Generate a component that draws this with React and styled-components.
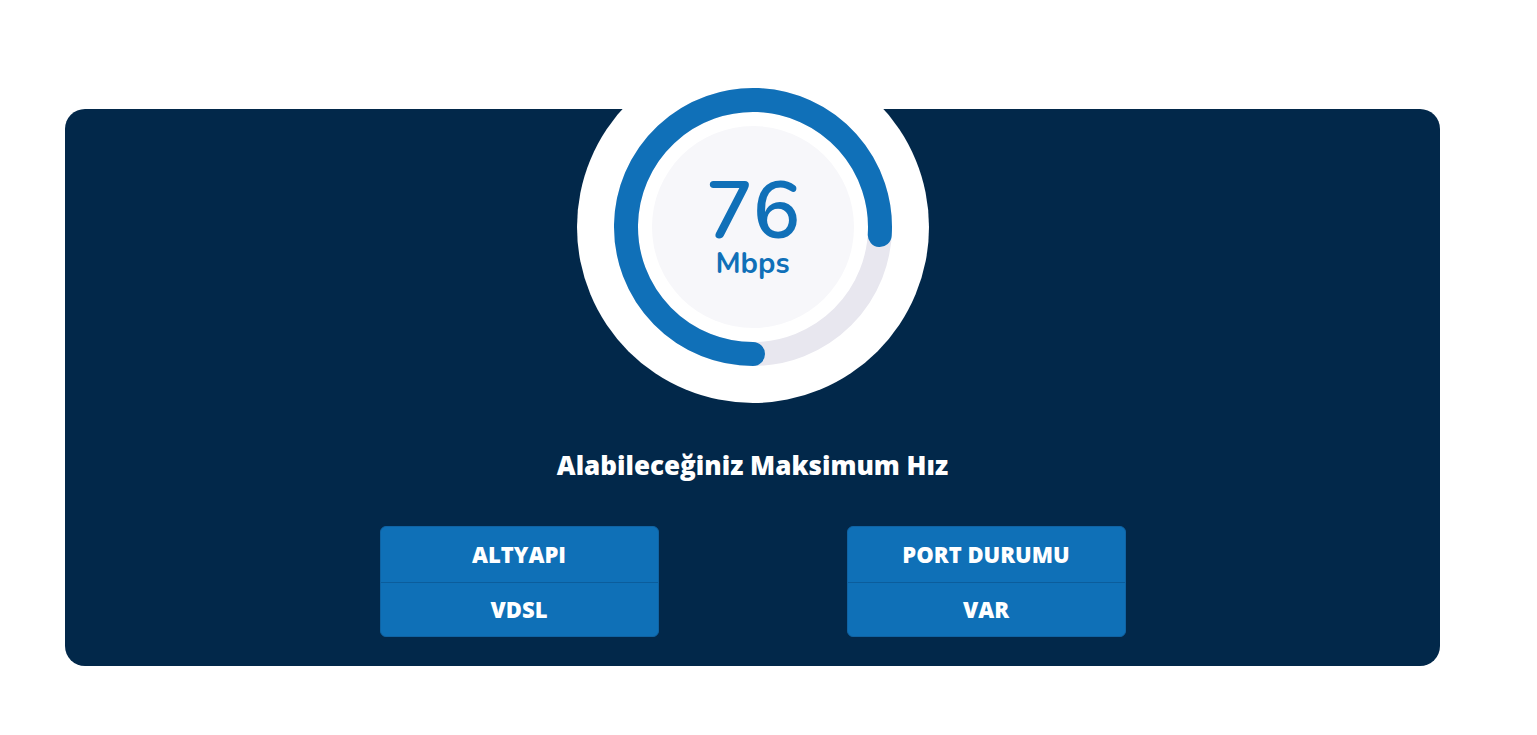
import React from 'react';
import styled, { createGlobalStyle } from 'styled-components';

const GlobalStyle = createGlobalStyle`
  html, body {
    margin: 0;
    padding: 0;
    background: #ffffff;
  }
  body {
    font-family: 'Open Sans', 'Liberation Sans', sans-serif;
  }
`;

const Page = styled.div`
  padding: 109px 97px 70px 65px;
`;

const Card = styled.section`
  background: #02284a;
  border-radius: 20px;
  display: flex;
  flex-direction: column;
  align-items: center;
  padding: 0 0 29px;
`;

const Gauge = styled.div`
  width: 352px;
  height: 352px;
  margin-top: -58px;
  border-radius: 50%;
  background: #ffffff;
  position: relative;
  display: flex;
  align-items: center;
  justify-content: center;
`;

const Dial = styled.svg`
  position: absolute;
  inset: 0;
`;

const Reading = styled.div`
  position: relative;
  display: flex;
  flex-direction: column;
  align-items: center;
  color: #1070b8;
  font-family: 'Nunito', 'Lato', 'Noto Sans', sans-serif;
  margin-top: 2px;
`;

const Value = styled.div`
  font-size: 80px;
  font-weight: 600;
  line-height: 64px;
  letter-spacing: -1px;
  padding-top: 4px;
`;

const Unit = styled.div`
  font-size: 29px;
  font-weight: 700;
  line-height: 34px;
  margin-top: 3px;
`;

const Title = styled.h2`
  margin: 47px 0 0;
  color: #ffffff;
  font-size: 26px;
  font-weight: 800;
  line-height: 30px;
`;

const Stats = styled.div`
  display: flex;
  gap: 188px;
  margin-top: 46px;
`;

const StatBox = styled.div`
  width: 279px;
  height: 111px;
  box-sizing: border-box;
  background: #0f70b7;
  border: 1px solid #1063a3;
  border-radius: 6px;
  display: grid;
  grid-template-rows: 1fr 1fr;
  overflow: hidden;
`;

const StatCell = styled.div`
  display: flex;
  align-items: center;
  justify-content: center;
  color: #ffffff;
  font-size: 22px;
  font-weight: 800;
  border-top: ${(p) => (p.$divided ? '1px solid #0b5d9c' : 'none')};
`;

const SPEED = 76;
const R = 127;
const C = 176;

function arcPath(percent) {
  const start = Math.PI / 2;
  const end = start + (percent / 100) * Math.PI * 2;
  const x1 = C + R * Math.cos(start);
  const y1 = C + R * Math.sin(start);
  const x2 = C + R * Math.cos(end);
  const y2 = C + R * Math.sin(end);
  const large = percent > 50 ? 1 : 0;
  return `M ${x1} ${y1} A ${R} ${R} 0 ${large} 1 ${x2} ${y2}`;
}

const Stat = ({ label, value }) => (
  <StatBox>
    <StatCell>{label}</StatCell>
    <StatCell $divided>{value}</StatCell>
  </StatBox>
);

export default function App() {
  return (
    <Page>
      <GlobalStyle />
      <Card>
        <Gauge>
          <Dial width="352" height="352" viewBox="0 0 352 352">
            <circle cx={C} cy={C} r={R} fill="none" stroke="#e8e7ef" strokeWidth="24" />
            <circle cx={C} cy={C} r="101" fill="#f7f7fa" />
            <path d={arcPath(SPEED)} fill="none" stroke="#1070b8" strokeWidth="24" strokeLinecap="round" />
          </Dial>
          <Reading>
            <Value>{SPEED}</Value>
            <Unit>Mbps</Unit>
          </Reading>
        </Gauge>
        <Title>Alabileceğiniz Maksimum Hız</Title>
        <Stats>
          <Stat label="ALTYAPI" value="VDSL" />
          <Stat label="PORT DURUMU" value="VAR" />
        </Stats>
      </Card>
    </Page>
  );
}
